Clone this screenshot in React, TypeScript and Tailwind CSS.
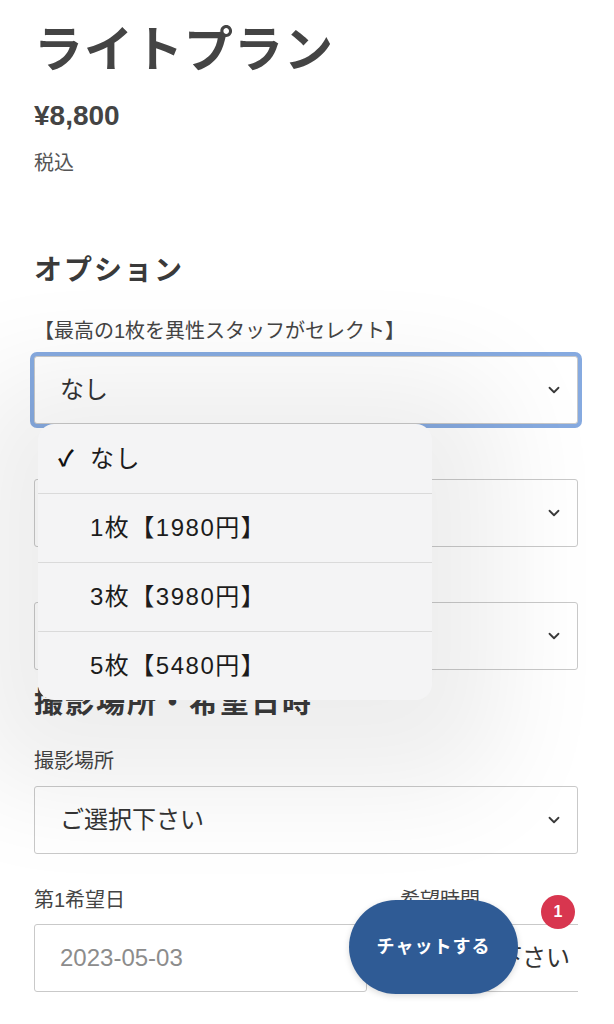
import { ChevronDown } from "lucide-react";

const font = "font-['Liberation_Sans','Noto_Sans_CJK_JP',sans-serif]";

const Chevron = () => (
  <ChevronDown className="w-[18px] h-[18px] text-[#3a3a3a]" strokeWidth={2.4} />
);

const SelectBox = ({ text, focused }: { text?: string; focused?: boolean }) => (
  <div
    className={
      "flex items-center justify-between h-[68px] bg-white border border-[#c9c9c9] rounded-[3px] pl-[25px] pr-[14px] " +
      (focused ? "ring-4 ring-[#86aae0]" : "")
    }
  >
    <span className="text-[24px] leading-[32px] text-[#333]">{text}</span>
    <Chevron />
  </div>
);

const options = ["なし", "1枚【1980円】", "3枚【3980円】", "5枚【5480円】"];

export default function App() {
  return (
    <div className={`${font} relative w-[614px] h-[1024px] overflow-hidden bg-white text-[#3d3d3d]`}>
      <div className="pl-[34px] pr-[36px] pt-[22px]">
        <h1 className="text-[49px] leading-[56px] font-bold tracking-[1px] text-[#444]">ライトプラン</h1>
        <p className="mt-[22px] text-[28px] leading-[32px] font-bold text-[#444]">¥8,800</p>
        <p className="mt-[17px] text-[20px] leading-[28px] text-[#555]">税込</p>

        <h2 className="mt-[76px] text-[28px] leading-[36px] font-bold tracking-[2px] text-[#3a3a3a]">オプション</h2>
        <p className="mt-[28px] text-[20px] leading-[28px] text-[#444]">【最高の1枚を異性スタッフがセレクト】</p>
        <div className="mt-[11px]">
          <SelectBox text="なし" focused />
        </div>
        <div className="mt-[55px]">
          <SelectBox />
        </div>
        <div className="mt-[55px]">
          <SelectBox />
        </div>

        <h2 className="mt-[15px] text-[29px] leading-[36px] font-bold tracking-[2px] text-[#3a3a3a]">撮影場所・希望日時</h2>
        <p className="mt-[26px] text-[20px] leading-[28px] text-[#444]">撮影場所</p>
        <div className="mt-[11px]">
          <SelectBox text="ご選択下さい" />
        </div>

        <div className="mt-[32px] grid grid-cols-[333px_1fr] gap-x-[33px]">
          <p className="text-[20px] leading-[28px] text-[#444]">第1希望日</p>
          <p className="text-[20px] leading-[28px] text-[#444]">希望時間</p>
          <div className="mt-[10px] h-[68px] flex items-center bg-white border border-[#c9c9c9] rounded-[3px] pl-[25px]">
            <span className="text-[24px] leading-[32px] text-[#8c8c8c]">2023-05-03</span>
          </div>
          <div className="mt-[10px] h-[68px] flex items-center overflow-hidden bg-white border-y border-l border-[#c9c9c9] pl-[25px] whitespace-nowrap">
            <span className="text-[24px] leading-[32px] text-[#333]">ご選択下さい</span>
          </div>
        </div>
      </div>

      {/* native picker popover */}
      <div className="absolute left-[38px] top-[424px] w-[394px] rounded-[16px] bg-[#f4f4f5] shadow-[0_20px_110px_70px_rgba(0,0,0,0.07)] overflow-hidden">
        {options.map((o, i) => (
          <div
            key={o}
            className={
              "relative h-[69px] flex items-center pl-[52px] text-[24px] tracking-[1.5px] text-[#1c1c1c] " +
              (i > 0 ? "border-t border-[#dadada]" : "")
            }
          >
            {i === 0 && (
              <span className="absolute left-[20px] text-[22px] font-bold text-[#111]">✓</span>
            )}
            {o}
          </div>
        ))}
      </div>

      {/* chat button */}
      <button className="absolute left-[349px] top-[900px] w-[169px] h-[94px] rounded-full bg-[#2f5b95] text-white text-[18px] font-bold tracking-[1px] shadow-[0_2px_6px_rgba(0,0,0,0.15)]">
        チャットする
      </button>
      <div className="absolute left-[541px] top-[895px] w-[34px] h-[34px] rounded-full bg-[#d8364f] flex items-center justify-center text-white text-[16px] font-bold">
        1
      </div>
    </div>
  );
}
